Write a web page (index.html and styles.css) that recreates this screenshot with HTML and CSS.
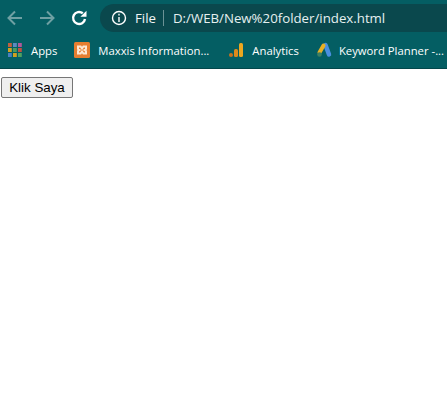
FILE: index.html
```html
<!DOCTYPE html>
<html lang="en">
<head>
<meta charset="utf-8">
<title>Klik Saya</title>
<link rel="stylesheet" href="styles.css">
</head>
<body>
<header class="chrome">
  <div class="toolbar">
    <svg class="nav nav-back" viewBox="0 0 16 16"><path d="M15 8H1.800M8 1.500L1.500 8L8 14.500"/></svg>
    <svg class="nav nav-forward" viewBox="0 0 16 16"><path d="M1 8H14.200M8 1.500L14.500 8L8 14.500"/></svg>
    <svg class="nav nav-reload" viewBox="0 0 16 16"><path d="M14 9A6 6 0 1 1 11.800 3.300"/><path class="fill" d="M9.400 6.800H15.500V0.700z"/></svg>
    <div class="omnibox">
      <svg class="info" viewBox="0 0 16 16"><circle cx="8" cy="8" r="6.500"/><path d="M8 7V12M8 3.800V5.600"/></svg>
      <span class="scheme">File</span>
      <span class="divider"></span>
      <span class="url">D:/WEB/New%20folder/index.html</span>
    </div>
  </div>
  <nav class="bookmarks">
    <a class="bookmark mark-apps">
      <svg class="mark" viewBox="0 0 14 14">
        <rect x="0" y="0" width="3.800" height="4" fill="#c0603f"/><rect x="5" y="0" width="3.800" height="4" fill="#5a8ac0"/><rect x="10" y="0" width="3.800" height="4" fill="#b0589a"/>
        <rect x="0" y="5" width="3.800" height="4" fill="#d0a020"/><rect x="5" y="5" width="3.800" height="4" fill="#4a9a60"/><rect x="10" y="5" width="3.800" height="4" fill="#c05040"/>
        <rect x="0" y="10" width="3.800" height="4" fill="#4a80c0"/><rect x="5" y="10" width="3.800" height="4" fill="#d0a020"/><rect x="10" y="10" width="3.800" height="4" fill="#50a060"/>
      </svg>
      <span>Apps</span>
    </a>
    <a class="bookmark mark-xampp">
      <svg class="mark" viewBox="0 0 16 16"><rect width="16" height="16" rx="1.500" fill="#e67e30"/><path d="M4 4.500h2.600l1.400 2 1.400-2H12v2.500l-1.500 1L12 9v2.500H9.400l-1.400-2-1.400 2H4V9l1.500-1L4 7z" fill="none" stroke="#fde8d4" stroke-width="2"/></svg>
      <span>Maxxis Information...</span>
    </a>
    <a class="bookmark mark-analytics">
      <svg class="mark" viewBox="0 0 16 16"><circle cx="3" cy="13" r="2" fill="#c9731f"/><rect x="6" y="7" width="4" height="8" rx="1.500" fill="#dd8a1c"/><rect x="11" y="1" width="4" height="14" rx="1.500" fill="#eda71f"/></svg>
      <span>Analytics</span>
    </a>
    <a class="bookmark mark-ads">
      <svg class="mark" viewBox="0 0 16 16"><path d="M9.500 3L13 12.500" stroke="#4a8fe0" stroke-width="4.500" stroke-linecap="round"/><path d="M7.500 3.500L3.500 10.500" stroke="#e8b024" stroke-width="4" stroke-linecap="round"/><circle cx="3.500" cy="12.500" r="2.300" fill="#3d7f62"/></svg>
      <span>Keyword Planner -...</span>
    </a>
  </nav>
</header>
<main class="page">
  <button class="click-me" type="button">Klik Saya</button>
</main>
</body>
</html>
```
FILE: styles.css
```css
* { box-sizing: border-box; }
html, body { margin: 0; height: 100%; background: #fff; overflow: hidden; }
.chrome {
  height: 69px;
  background: #045e63;
  border-bottom: 1px solid #03474b;
  font-family: "Open Sans", "Noto Sans", sans-serif;
  color: #fff;
}
.toolbar { height: 36px; display: flex; align-items: center; padding-left: 7px; }
.nav { width: 16px; height: 16px; flex: none; fill: none; stroke-width: 2; }
.nav-back, .nav-forward { stroke: #6fa0a3; }
.nav-back { margin-right: 16px; }
.nav-forward { margin-right: 16px; }
.nav-reload { stroke: #fff; stroke-width: 2.400; margin-right: 13px; }
.nav-reload .fill { fill: #fff; stroke: none; }
.omnibox {
  flex: 1;
  height: 28px;
  display: flex;
  align-items: center;
  padding-left: 11px;
  background: #0a484d;
  border-radius: 14px 0 0 14px;
  font-size: 13.250px;
}
.info { width: 16px; height: 16px; flex: none; fill: none; stroke: #fff; stroke-width: 1.400; margin-right: 8px; }
.scheme { color: #f1f5f5; }
.divider { width: 1px; height: 16px; background: #6b9295; margin: 0 9px 0 7px; }
.url { color: #e6f0f0; white-space: nowrap; }
.bookmarks { height: 32px; display: flex; align-items: center; padding: 0 0 4px 8px; font-size: 11.300px; }
.bookmark { display: flex; align-items: center; white-space: nowrap; }
.mark { width: 14px; height: 14px; flex: none; margin-right: 9px; }
.mark-xampp { margin-left: 17px; }
.mark-xampp .mark { width: 16px; height: 16px; margin-right: 8px; }
.mark-analytics { margin-left: 19px; }
.mark-analytics .mark { width: 16px; height: 16px; margin-right: 8px; }
.mark-ads { margin-left: 17px; }
.mark-ads .mark { width: 16px; height: 16px; margin-right: 7px; }
.page { padding: 8px 1px; }
.click-me {
  display: block;
  width: 72px;
  height: 21px;
  padding: 0;
  background: #efefef;
  border: 1px solid #767676;
  border-radius: 2px;
  color: #000;
  font: 13.333px "Liberation Sans", Arial, sans-serif;
}
```
